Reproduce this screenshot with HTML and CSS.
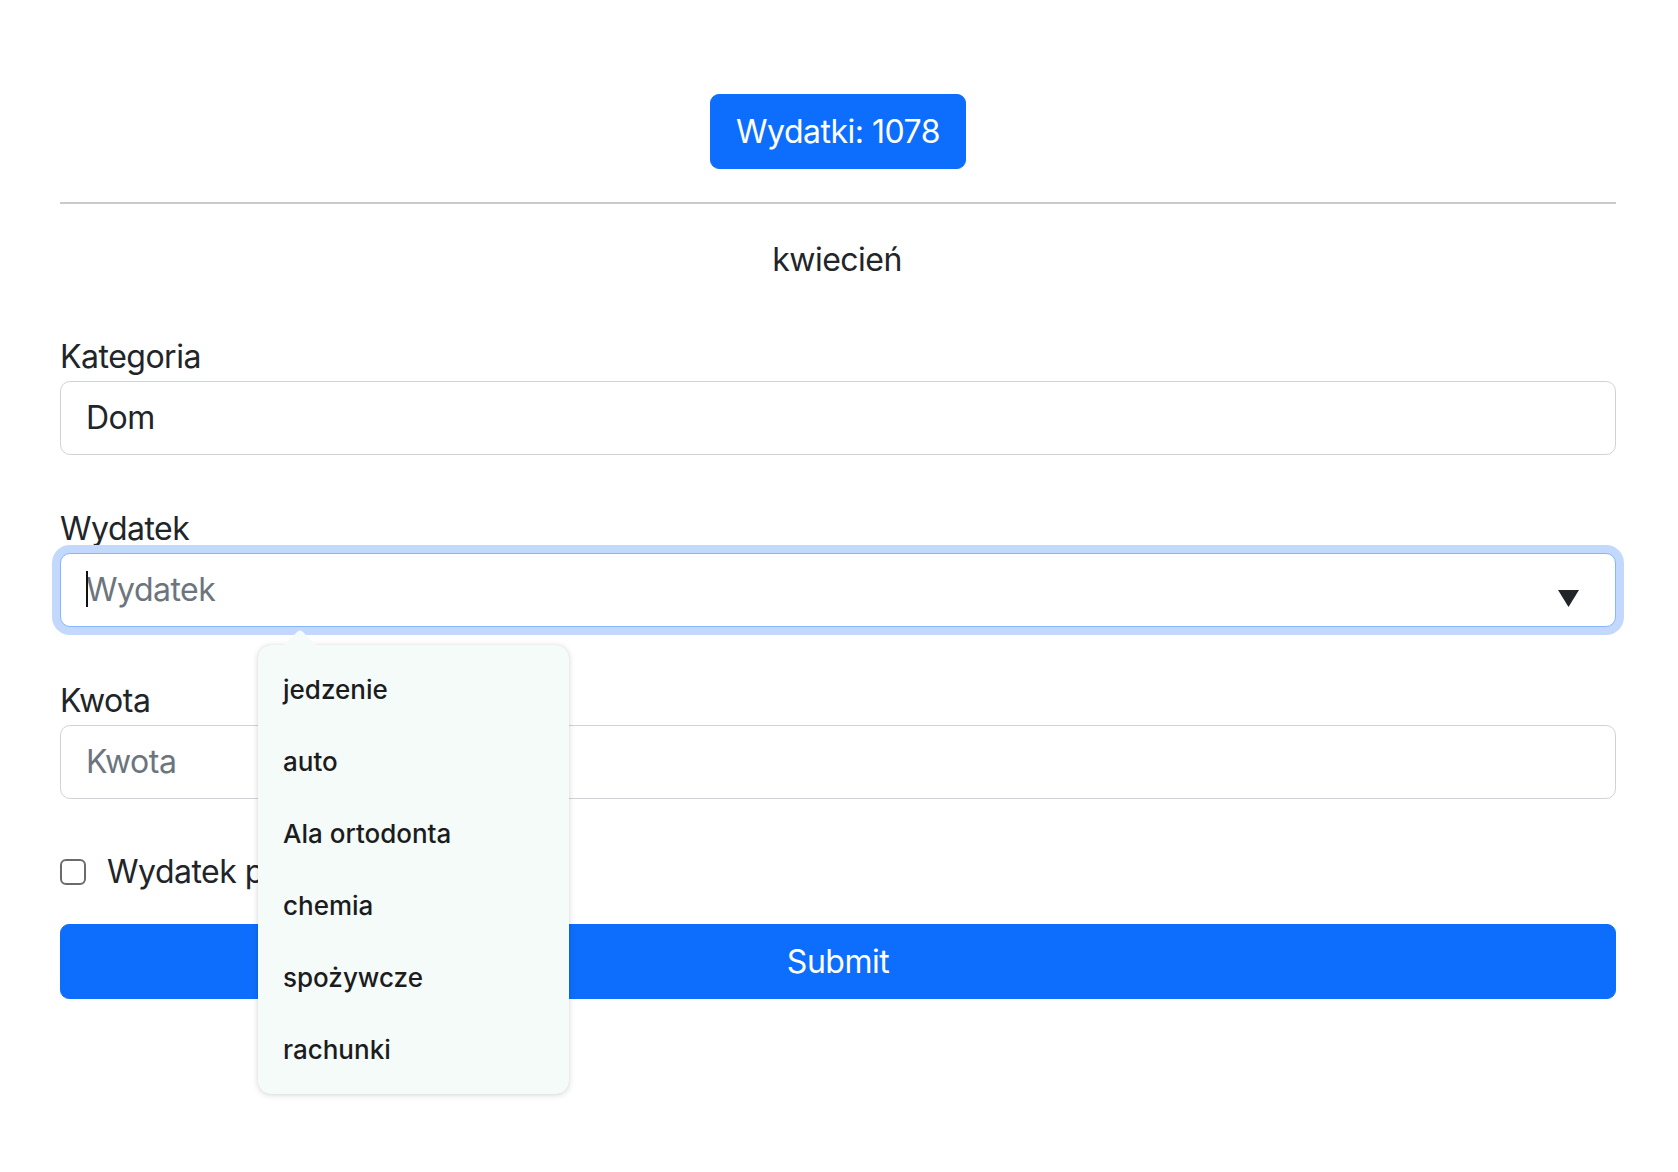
FILE: index.html
```html
<!DOCTYPE html>
<html lang="pl">
<head>
<meta charset="utf-8">
<title>Wydatki</title>
<link rel="stylesheet" href="styles.css">
</head>
<body>
<div class="page">
  <div class="top">
    <button class="btn btn-total" type="button">Wydatki: 1078</button>
  </div>
  <hr class="divider">
  <div class="month">kwiecień</div>
  <form class="form">
    <div class="group">
      <label class="label">Kategoria</label>
      <div class="field"><span class="value">Dom</span></div>
    </div>
    <div class="group">
      <label class="label">Wydatek</label>
      <div class="field field-focus">
        <span class="caret"></span>
        <span class="placeholder">Wydatek</span>
        <svg class="arrow" width="21" height="17" viewBox="0 0 21 17"><polygon points="0,0 21,0 10.5,17" fill="#212529"/></svg>
      </div>
    </div>
    <div class="group group-last">
      <label class="label">Kwota</label>
      <div class="field"><span class="placeholder">Kwota</span></div>
    </div>
    <div class="check">
      <span class="checkbox"></span>
      <span class="check-label">Wydatek powtarzalny</span>
    </div>
    <button class="btn btn-submit" type="button">Submit</button>
  </form>

  <div class="popup">
    <svg class="popup-tip" width="36" height="17" viewBox="0 0 36 17"><path d="M0,17 L15,2 Q18,-1 21,2 L36,17 Z" fill="#f4fbf8"/></svg>
    <ul class="options">
      <li>jedzenie</li>
      <li>auto</li>
      <li>Ala ortodonta</li>
      <li>chemia</li>
      <li>spożywcze</li>
      <li>rachunki</li>
    </ul>
  </div>
</div>
</body>
</html>
```

FILE: styles.css
```css
* { box-sizing: border-box; }
html, body { margin: 0; padding: 0; background: #fff; }
body {
  font-family: Inter, "Noto Sans", "Liberation Sans", sans-serif;
  color: #212529;
  font-size: 32px;
  line-height: 48px;
  letter-spacing: -0.5px;
}
.page {
  position: relative;
  padding: 94px 62px 0 60px;
  min-height: 1172px;
}
.top { text-align: center; }
.btn {
  font-family: inherit;
  font-size: 32px;
  line-height: 48px;
  letter-spacing: -0.5px;
  color: #fff;
  background: #0d6efd;
  border: 1px solid #0d6efd;
  border-radius: 9px;
  cursor: pointer;
  white-space: nowrap;
}
.btn-total {
  padding: 13px 0 12px;
  width: 256px;
}
.divider {
  margin: 33px 0 0;
  border: 0;
  border-top: 2px solid #c9cacb;
  height: 0;
}
.month {
  text-align: center;
  margin: 32px 0 49px;
  padding-right: 2px;
}
.group { margin-bottom: 50px; }
.group-last { margin-bottom: 49px; }
.label {
  display: block;
  margin-bottom: 0;
}
.field {
  position: relative;
  height: 74px;
  border: 1px solid #cfd3d7;
  border-radius: 10px;
  padding: 0 25px;
  display: flex;
  align-items: center;
  background: #fff;
}
.field-focus {
  border-color: #86b7fe;
  box-shadow: 0 0 0 8px #c2d8fc;
}
.value { color: #212529; }
.placeholder { color: #6c757d; }
.caret {
  position: absolute;
  left: 25px;
  top: 17px;
  width: 2px;
  height: 36px;
  background: #111;
}
.arrow {
  position: absolute;
  right: 36px;
  top: 36px;
}
.check {
  display: flex;
  align-items: center;
  height: 48px;
  margin-bottom: 28px;
}
.checkbox {
  flex: none;
  width: 26px;
  height: 26px;
  border: 2px solid #6b6b6b;
  border-radius: 6px;
  margin-right: 21px;
  background: #fff;
}
.check-label {
  white-space: nowrap;
}
.btn-submit {
  display: block;
  width: 100%;
  height: 75px;
  padding: 0;
}
.popup {
  position: absolute;
  left: 258px;
  top: 645px;
  width: 311px;
  height: 449px;
  background: #f4fbf8;
  border-radius: 13px;
  box-shadow: 0 1px 6px rgba(0, 0, 0, 0.16), 0 0 1px rgba(0, 0, 0, 0.12);
}
.popup-tip {
  position: absolute;
  left: 24px;
  top: -15px;
}
.options {
  list-style: none;
  margin: 0;
  padding: 9px 0 8px;
}
.options li {
  height: 72px;
  line-height: 72px;
  padding-left: 25px;
  font-size: 26px;
  font-weight: 500;
  letter-spacing: 0;
  color: #1c1c1e;
}
```
